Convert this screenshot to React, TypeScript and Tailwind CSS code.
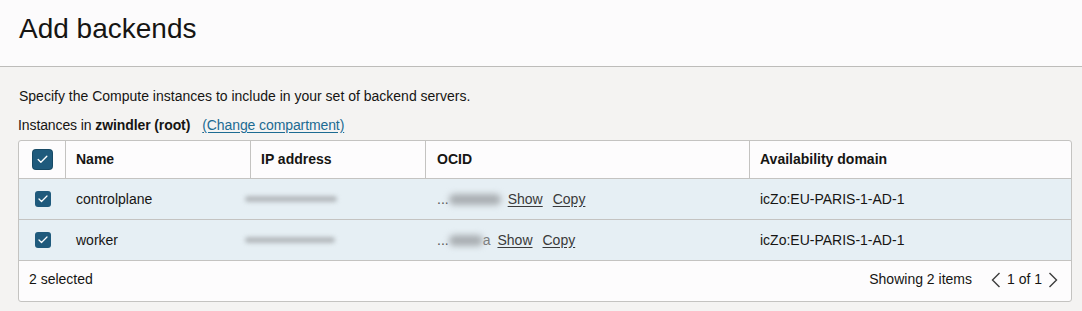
import { Check } from 'lucide-react';

interface Instance {
  name: string;
  ipWidth: number;
  ocidTail: string;
  ocidBlur: number;
  domain: string;
}

const instances: Instance[] = [
  { name: 'controlplane', ipWidth: 92, ocidTail: '', ocidBlur: 52, domain: 'icZo:EU-PARIS-1-AD-1' },
  { name: 'worker', ipWidth: 90, ocidTail: 'a', ocidBlur: 34, domain: 'icZo:EU-PARIS-1-AD-1' },
];

function Checkbox({ big = false }: { big?: boolean }) {
  return (
    <span
      className={
        big
          ? 'flex h-[19px] w-[19px] items-center justify-center rounded-[3px] bg-[#1f5a7c] ring-1 ring-[#174a66]'
          : 'flex h-4 w-4 items-center justify-center rounded-[3px] bg-[#1f5a7c]'
      }
    >
      <Check className="text-white" size={big ? 13 : 12} strokeWidth={2.5} />
    </span>
  );
}

function Chevron({ dir }: { dir: 'left' | 'right' }) {
  return (
    <svg width="11" height="16" viewBox="0 0 11 16" fill="none" stroke="#3d3d3d" strokeWidth="1.4">
      <path d={dir === 'left' ? 'M9.5 1 L2.5 8 L9.5 15' : 'M1.5 1 L8.5 8 L1.5 15'} />
    </svg>
  );
}

export default function App() {
  return (
    <div className="flex h-[311px] w-[1082px] flex-col bg-[#f4f3f2] text-[#161513] font-['Liberation_Sans',Arial,sans-serif]">
      <div className="h-[67px] shrink-0 border-b border-[#bdbcba] bg-[#fcfbfc] px-[19px] pt-[13px]">
        <h1 className="text-[28px] leading-[32px] text-[#161513]">Add backends</h1>
      </div>

      <div className="flex flex-col px-[18px] pt-[20px]">
        <p className="pl-px text-[14px] leading-[18px]">
          Specify the Compute instances to include in your set of backend servers.
        </p>
        <p className="mt-[12px] text-[14px] leading-[17px] tracking-[-0.1px]">
          Instances in <span className="font-bold">zwindler (root)</span>
          <span className="ml-[12px] text-[#1c6b92] underline underline-offset-2">(Change compartment)</span>
        </p>

        <div className="mt-[6px] w-[1054px] overflow-hidden rounded-[3px] border border-[#c4c3c1] bg-[#fdfcfd]">
          <div className="grid h-[38px] grid-cols-[47px_185px_175px_324px_1fr] border-b border-[#c4c3c1] text-[14px] font-bold">
            <div className="flex items-center justify-center border-r border-[#c4c3c1]">
              <Checkbox big />
            </div>
            <div className="flex items-center border-r border-[#c4c3c1] pl-[10px]">Name</div>
            <div className="flex items-center border-r border-[#c4c3c1] pl-[10px]">IP address</div>
            <div className="flex items-center border-r border-[#c4c3c1] pl-[11px]">OCID</div>
            <div className="flex items-center pl-[10px]">Availability domain</div>
          </div>

          {instances.map((inst) => (
            <div
              key={inst.name}
              className="grid h-[41px] grid-cols-[47px_185px_175px_324px_1fr] border-b border-[#c4c3c1] bg-[#e6eff4] text-[14px]"
            >
              <div className="flex items-center justify-center">
                <Checkbox />
              </div>
              <div className="flex items-center pl-[10px]">{inst.name}</div>
              <div className="flex items-center">
                <span
                  className="ml-[-6px] h-[6px] rounded-full bg-[#b4b9bd] blur-[2px]"
                  style={{ width: inst.ipWidth }}
                />
              </div>
              <div className="flex items-center pl-[11px]">
                <span className="text-[#555]">...</span>
                <span
                  className="h-[11px] rounded-full bg-[#a9aeb2] blur-[3px]"
                  style={{ width: inst.ocidBlur }}
                />
                {inst.ocidTail && <span className="text-[#7a7a7a]">{inst.ocidTail}</span>}
                <span className="ml-[7px] text-[#3a3a3a] underline underline-offset-2">Show</span>
                <span className="ml-[10px] text-[#3a3a3a] underline underline-offset-2">Copy</span>
              </div>
              <div className="flex items-center pl-[10px]">{inst.domain}</div>
            </div>
          ))}

          <div className="flex h-[40px] items-center justify-between pb-[3px] pl-[10px] pr-[12px] text-[14px]">
            <span>2 selected</span>
            <div className="flex items-center">
              <span>Showing 2 items</span>
              <span className="ml-[18px] flex"><Chevron dir="left" /></span>
              <span className="ml-[6px]">1 of 1</span>
              <span className="ml-[6px] flex"><Chevron dir="right" /></span>
            </div>
          </div>
        </div>
      </div>
    </div>
  );
}
